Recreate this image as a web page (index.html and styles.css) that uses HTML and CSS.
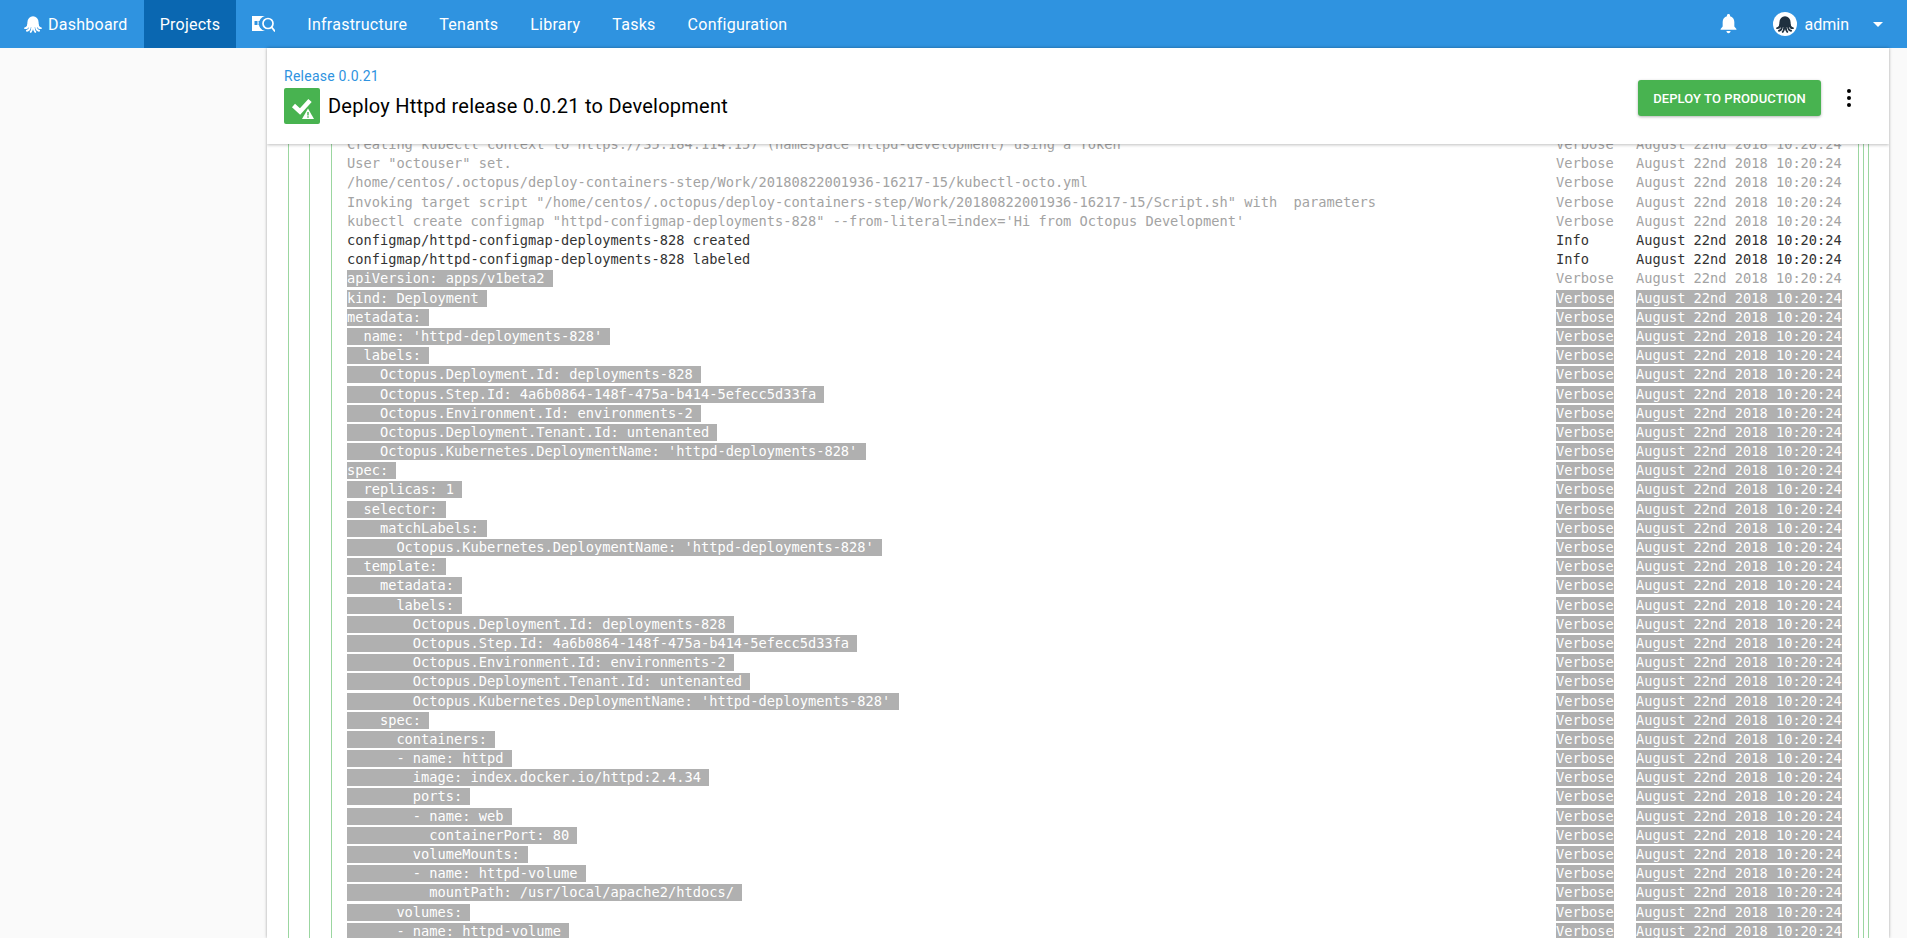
FILE: index.html
```html
<!DOCTYPE html>
<html lang="en">
<head>
<meta charset="utf-8">
<title>Deploy Httpd release 0.0.21 to Development</title>
<link rel="stylesheet" href="styles.css">
</head>
<body>
<nav class="nav">
  <a class="nav-item"><svg class="logo" viewBox="0 0 24 24"><path class="dome" d="M4.500 10a7.500 8.500 0 0 1 15 0c0 3 .5 5 1.500 6H3c1-1 1.500-3 1.500-6z"/><path class="legs" d="M6 13c-.5 3-2 4.500-4.500 4.500M8 15c0 3-1.500 5.500-4 6M11 16c0 3-.5 5-2 6.500M13 16c0 3 .5 5 2 6.500M16 15c0 3 1.500 5.500 4 6M18 13c.5 3 2 4.500 4.500 4.500"/></svg>Dashboard</a>
  <a class="nav-item active">Projects</a>
  <a class="nav-item"><svg class="search-ico" viewBox="0 0 23 16"><path class="card" d="M0 0h16a7 7 0 0 0-3 15H0z"/><path class="bars" d="M2.500 5h3v4h-3zM6.500 5H11v1.500H6.500zM6.500 7.500H11V9H6.500z"/><circle class="lens" cx="16" cy="7.500" r="5"/><path class="lens" d="M19.500 11l3.500 4.500"/></svg></a>
  <a class="nav-item">Infrastructure</a>
  <a class="nav-item">Tenants</a>
  <a class="nav-item">Library</a>
  <a class="nav-item">Tasks</a>
  <a class="nav-item">Configuration</a>
  <div class="nav-right">
    <svg class="bell" viewBox="0 0 20 24"><path d="M10 0c1.100 0 1.900.8 1.900 1.900v.8C15 3.500 17 6.300 17 9.500V15l2.500 3v1H.5v-1L3 15V9.500c0-3.200 2-6 5.100-6.800v-.8C8.100.8 8.900 0 10 0zM7.500 20.500h5c0 1.400-1.100 2.500-2.500 2.500s-2.500-1.100-2.500-2.500z"/></svg>
    <span class="avatar"><svg class="octo" viewBox="0 0 24 24"><path class="dome" d="M4.500 10a7.500 8.500 0 0 1 15 0c0 3 .5 5 1.500 6H3c1-1 1.500-3 1.500-6z"/><path class="legs" d="M6 13c-.5 3-2 4.500-4.500 4.500M8 15c0 3-1.500 5.500-4 6M11 16c0 3-.5 5-2 6.500M13 16c0 3 .5 5 2 6.500M16 15c0 3 1.500 5.500 4 6M18 13c.5 3 2 4.500 4.500 4.500"/></svg></span>
    <span class="user">admin</span>
    <span class="caret"></span>
  </div>
</nav>
<div class="page">
  <main class="panel">
    <header class="head">
      <div class="head-text">
        <a class="release">Release 0.0.21</a>
        <div class="title-row">
          <span class="status"><svg viewBox="0 0 36 36"><path class="tick" d="M9.500 17.500l6.500 6L26 12.500"/><path class="warn" d="M24 20.500l6 10.500H18z"/><path class="bang" d="M23.300 24h1.400v3.500h-1.400zM23.300 28.300h1.400v1.500h-1.400z"/></svg></span>
          <h1 class="title">Deploy Httpd release 0.0.21 to Development</h1>
        </div>
      </div>
      <button class="deploy">Deploy to Production</button>
      <svg class="kebab" viewBox="0 0 6 20"><circle cx="3" cy="3" r="2"/><circle cx="3" cy="10" r="2"/><circle cx="3" cy="17" r="2"/></svg>
    </header>
    <div class="log-view">
      <div class="block"><div class="block mid"><div class="block inner">
        <div class="row verbose"><span class="msg"><span>Creating kubectl context to https://35.184.114.157 (namespace httpd-development) using a Token</span></span><span class="cat"><span>Verbose</span></span><span class="date"><span>August 22nd 2018 10:20:24</span></span></div>
        <div class="row verbose"><span class="msg"><span>User "octouser" set.</span></span><span class="cat"><span>Verbose</span></span><span class="date"><span>August 22nd 2018 10:20:24</span></span></div>
        <div class="row verbose"><span class="msg"><span>/home/centos/.octopus/deploy-containers-step/Work/20180822001936-16217-15/kubectl-octo.yml</span></span><span class="cat"><span>Verbose</span></span><span class="date"><span>August 22nd 2018 10:20:24</span></span></div>
        <div class="row verbose"><span class="msg"><span>Invoking target script "/home/centos/.octopus/deploy-containers-step/Work/20180822001936-16217-15/Script.sh" with  parameters</span></span><span class="cat"><span>Verbose</span></span><span class="date"><span>August 22nd 2018 10:20:24</span></span></div>
        <div class="row verbose"><span class="msg"><span>kubectl create configmap "httpd-configmap-deployments-828" --from-literal=index='Hi from Octopus Development'</span></span><span class="cat"><span>Verbose</span></span><span class="date"><span>August 22nd 2018 10:20:24</span></span></div>
        <div class="row info"><span class="msg"><span>configmap/httpd-configmap-deployments-828 created</span></span><span class="cat"><span>Info</span></span><span class="date"><span>August 22nd 2018 10:20:24</span></span></div>
        <div class="row info"><span class="msg"><span>configmap/httpd-configmap-deployments-828 labeled</span></span><span class="cat"><span>Info</span></span><span class="date"><span>August 22nd 2018 10:20:24</span></span></div>
        <div class="row verbose first-sel"><span class="msg"><span>apiVersion: apps/v1beta2 </span></span><span class="cat"><span>Verbose</span></span><span class="date"><span>August 22nd 2018 10:20:24</span></span></div>
        <div class="row sel"><span class="msg"><span>kind: Deployment </span></span><span class="cat"><span>Verbose</span></span><span class="date"><span>August 22nd 2018 10:20:24</span></span></div>
        <div class="row sel"><span class="msg"><span>metadata: </span></span><span class="cat"><span>Verbose</span></span><span class="date"><span>August 22nd 2018 10:20:24</span></span></div>
        <div class="row sel"><span class="msg"><span>  name: 'httpd-deployments-828' </span></span><span class="cat"><span>Verbose</span></span><span class="date"><span>August 22nd 2018 10:20:24</span></span></div>
        <div class="row sel"><span class="msg"><span>  labels: </span></span><span class="cat"><span>Verbose</span></span><span class="date"><span>August 22nd 2018 10:20:24</span></span></div>
        <div class="row sel"><span class="msg"><span>    Octopus.Deployment.Id: deployments-828 </span></span><span class="cat"><span>Verbose</span></span><span class="date"><span>August 22nd 2018 10:20:24</span></span></div>
        <div class="row sel"><span class="msg"><span>    Octopus.Step.Id: 4a6b0864-148f-475a-b414-5efecc5d33fa </span></span><span class="cat"><span>Verbose</span></span><span class="date"><span>August 22nd 2018 10:20:24</span></span></div>
        <div class="row sel"><span class="msg"><span>    Octopus.Environment.Id: environments-2 </span></span><span class="cat"><span>Verbose</span></span><span class="date"><span>August 22nd 2018 10:20:24</span></span></div>
        <div class="row sel"><span class="msg"><span>    Octopus.Deployment.Tenant.Id: untenanted </span></span><span class="cat"><span>Verbose</span></span><span class="date"><span>August 22nd 2018 10:20:24</span></span></div>
        <div class="row sel"><span class="msg"><span>    Octopus.Kubernetes.DeploymentName: 'httpd-deployments-828' </span></span><span class="cat"><span>Verbose</span></span><span class="date"><span>August 22nd 2018 10:20:24</span></span></div>
        <div class="row sel"><span class="msg"><span>spec: </span></span><span class="cat"><span>Verbose</span></span><span class="date"><span>August 22nd 2018 10:20:24</span></span></div>
        <div class="row sel"><span class="msg"><span>  replicas: 1 </span></span><span class="cat"><span>Verbose</span></span><span class="date"><span>August 22nd 2018 10:20:24</span></span></div>
        <div class="row sel"><span class="msg"><span>  selector: </span></span><span class="cat"><span>Verbose</span></span><span class="date"><span>August 22nd 2018 10:20:24</span></span></div>
        <div class="row sel"><span class="msg"><span>    matchLabels: </span></span><span class="cat"><span>Verbose</span></span><span class="date"><span>August 22nd 2018 10:20:24</span></span></div>
        <div class="row sel"><span class="msg"><span>      Octopus.Kubernetes.DeploymentName: 'httpd-deployments-828' </span></span><span class="cat"><span>Verbose</span></span><span class="date"><span>August 22nd 2018 10:20:24</span></span></div>
        <div class="row sel"><span class="msg"><span>  template: </span></span><span class="cat"><span>Verbose</span></span><span class="date"><span>August 22nd 2018 10:20:24</span></span></div>
        <div class="row sel"><span class="msg"><span>    metadata: </span></span><span class="cat"><span>Verbose</span></span><span class="date"><span>August 22nd 2018 10:20:24</span></span></div>
        <div class="row sel"><span class="msg"><span>      labels: </span></span><span class="cat"><span>Verbose</span></span><span class="date"><span>August 22nd 2018 10:20:24</span></span></div>
        <div class="row sel"><span class="msg"><span>        Octopus.Deployment.Id: deployments-828 </span></span><span class="cat"><span>Verbose</span></span><span class="date"><span>August 22nd 2018 10:20:24</span></span></div>
        <div class="row sel"><span class="msg"><span>        Octopus.Step.Id: 4a6b0864-148f-475a-b414-5efecc5d33fa </span></span><span class="cat"><span>Verbose</span></span><span class="date"><span>August 22nd 2018 10:20:24</span></span></div>
        <div class="row sel"><span class="msg"><span>        Octopus.Environment.Id: environments-2 </span></span><span class="cat"><span>Verbose</span></span><span class="date"><span>August 22nd 2018 10:20:24</span></span></div>
        <div class="row sel"><span class="msg"><span>        Octopus.Deployment.Tenant.Id: untenanted </span></span><span class="cat"><span>Verbose</span></span><span class="date"><span>August 22nd 2018 10:20:24</span></span></div>
        <div class="row sel"><span class="msg"><span>        Octopus.Kubernetes.DeploymentName: 'httpd-deployments-828' </span></span><span class="cat"><span>Verbose</span></span><span class="date"><span>August 22nd 2018 10:20:24</span></span></div>
        <div class="row sel"><span class="msg"><span>    spec: </span></span><span class="cat"><span>Verbose</span></span><span class="date"><span>August 22nd 2018 10:20:24</span></span></div>
        <div class="row sel"><span class="msg"><span>      containers: </span></span><span class="cat"><span>Verbose</span></span><span class="date"><span>August 22nd 2018 10:20:24</span></span></div>
        <div class="row sel"><span class="msg"><span>      - name: httpd </span></span><span class="cat"><span>Verbose</span></span><span class="date"><span>August 22nd 2018 10:20:24</span></span></div>
        <div class="row sel"><span class="msg"><span>        image: index.docker.io/httpd:2.4.34 </span></span><span class="cat"><span>Verbose</span></span><span class="date"><span>August 22nd 2018 10:20:24</span></span></div>
        <div class="row sel"><span class="msg"><span>        ports: </span></span><span class="cat"><span>Verbose</span></span><span class="date"><span>August 22nd 2018 10:20:24</span></span></div>
        <div class="row sel"><span class="msg"><span>        - name: web </span></span><span class="cat"><span>Verbose</span></span><span class="date"><span>August 22nd 2018 10:20:24</span></span></div>
        <div class="row sel"><span class="msg"><span>          containerPort: 80 </span></span><span class="cat"><span>Verbose</span></span><span class="date"><span>August 22nd 2018 10:20:24</span></span></div>
        <div class="row sel"><span class="msg"><span>        volumeMounts: </span></span><span class="cat"><span>Verbose</span></span><span class="date"><span>August 22nd 2018 10:20:24</span></span></div>
        <div class="row sel"><span class="msg"><span>        - name: httpd-volume </span></span><span class="cat"><span>Verbose</span></span><span class="date"><span>August 22nd 2018 10:20:24</span></span></div>
        <div class="row sel"><span class="msg"><span>          mountPath: /usr/local/apache2/htdocs/ </span></span><span class="cat"><span>Verbose</span></span><span class="date"><span>August 22nd 2018 10:20:24</span></span></div>
        <div class="row sel"><span class="msg"><span>      volumes: </span></span><span class="cat"><span>Verbose</span></span><span class="date"><span>August 22nd 2018 10:20:24</span></span></div>
        <div class="row sel"><span class="msg"><span>      - name: httpd-volume </span></span><span class="cat"><span>Verbose</span></span><span class="date"><span>August 22nd 2018 10:20:24</span></span></div>
      </div></div></div>
    </div>
  </main>
</div>
</body>
</html>
```
FILE: styles.css
```css
* { box-sizing: border-box; }
html, body { margin: 0; height: 100%; overflow: hidden; }
body { background: #fafafa; font-family: Roboto, sans-serif; color: #000; }

.nav { display: flex; align-items: stretch; height: 48px; padding-left: 8px; background: #2f93e0; color: #fff; font-size: 16px; }
.nav-item { display: flex; align-items: center; padding: 0 16px; color: #fff; letter-spacing: .25px; }
.nav-item.active { background: #0a67b1; }
.logo { width: 18px; height: 18px; margin-right: 6px; }
.dome { fill: #fff; }
.legs { fill: none; stroke: #fff; stroke-width: 2.600; stroke-linecap: round; }
.search-ico { width: 23px; height: 16px; }
.search-ico .card { fill: #fff; }
.search-ico .bars { fill: #2f93e0; }
.search-ico .lens { fill: none; stroke: #fff; stroke-width: 1.700; }
.nav-right { display: flex; align-items: center; margin-left: auto; }
.bell { width: 17px; height: 20px; margin-right: 36px; fill: #fff; }
.avatar { display: flex; align-items: center; justify-content: center; width: 24px; height: 24px; border-radius: 50%; background: #fff; }
.octo { width: 18px; height: 18px; }
.octo .dome { fill: #1f303f; }
.octo .legs { stroke: #1f303f; }
.user { margin-left: 8px; }
.caret { width: 0; height: 0; margin-left: 24px; margin-right: 24px; border-left: 5px solid transparent; border-right: 5px solid transparent; border-top: 5px solid #fff; }

.page { display: flex; padding-left: 267px; padding-right: 18px; height: 890px; }
.panel { position: relative; display: flex; flex-direction: column; width: 100%; background: #fff; box-shadow: 0 0 3px rgba(0,0,0,.35); overflow: hidden; }

.head { position: relative; z-index: 2; display: flex; align-items: flex-start; flex: none; height: 96px; padding: 16px 0 0 17px; background: #fff; box-shadow: 0 1px 3px rgba(0,0,0,.25); }
.head-text { flex: 1; }
.release { display: block; height: 24px; font-size: 14px; line-height: 24px; color: #2f93e0; letter-spacing: .25px; }
.title-row { display: flex; align-items: center; gap: 8px; }
.status { display: flex; width: 36px; height: 36px; border-radius: 2px; background: #48b350; }
.status svg { width: 36px; height: 36px; }
.tick { fill: none; stroke: #fff; stroke-width: 4.500; }
.warn { fill: #fff; stroke: #48b350; stroke-width: 1.500; paint-order: stroke; }
.bang { fill: #48b350; }
.title { margin: 0; font-size: 20px; font-weight: 400; line-height: 36px; letter-spacing: .24px; }
.deploy { width: 183px; height: 36px; margin-top: 16px; border: 0; border-radius: 3px; background: #48b350; color: #fff; font-family: Roboto, sans-serif; font-size: 13px; font-weight: 500; letter-spacing: .1px; text-transform: uppercase; box-shadow: 0 1px 3px rgba(0,0,0,.3); }
.kebab { width: 6px; height: 20px; margin: 24px 37px 0 25px; fill: #000; }

.log-view { flex: 1; margin-top: -9px; padding: 0 20px 0 21px; overflow: hidden; }
.block { border-left: 1px solid #9bd6a0; border-right: 1px solid #9bd6a0; padding: 0 4px 0 20px; }
.block.mid { padding-left: 21px; }
.block.inner { padding: 0 0 0 15px; }

.row { display: flex; height: 19.200px; align-items: center; font-family: "DejaVu Sans Mono", monospace; font-size: 13.680px; line-height: 17px; white-space: pre; }
.row > span > span { display: inline-block; height: 17px; }
.msg { flex: none; width: 1209px; overflow: hidden; }
.cat { flex: none; width: 80px; }
.date { flex: none; width: 206px; }
.verbose { color: #a3a3a3; }
.info { color: #333; }
.first-sel .msg > span, .sel > span > span { background: #b0b0b0; color: #fff; }
```
